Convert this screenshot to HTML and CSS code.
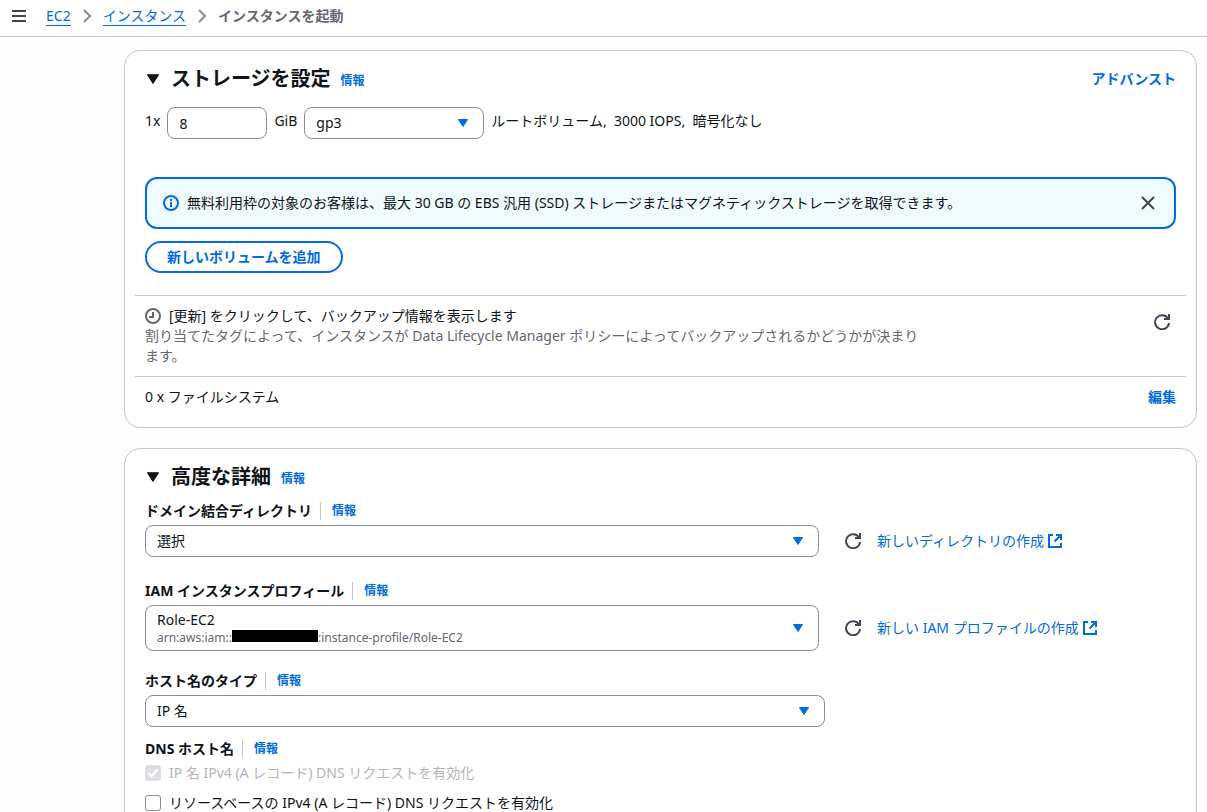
FILE: index.html
```html
<!DOCTYPE html>
<html lang="ja">
<head>
  <meta charset="UTF-8">
  <title>インスタンスを起動 | EC2</title>
  <meta name="viewport" content="width=device-width, initial-scale=1.0">
  <link rel="stylesheet" href="styles.css">
</head>
<body>

<svg class="sprite" aria-hidden="true">
  <symbol id="caret" viewBox="0 0 10 8"><path d="M.5 .5h9L5 7.5z" fill="currentColor" stroke="currentColor" stroke-linejoin="round"/></symbol>
  <symbol id="chevron" viewBox="0 0 16 16"><path d="M5 2l6 6-6 6" fill="none" stroke="currentColor" stroke-width="2"/></symbol>
  <symbol id="refresh" viewBox="0 0 16 16"><path d="M15 9A7 7 0 1 1 14 4.500M15 0v5h-5" fill="none" stroke="currentColor" stroke-width="2"/></symbol>
  <symbol id="external" viewBox="0 0 14 14"><path d="M5 1H1v12h12V9M8 1h5v5M13 1L6.500 7.500" fill="none" stroke="currentColor" stroke-width="2"/></symbol>
</svg>

<header class="topbar">
  <button class="icon-button" aria-label="メニュー">
    <svg width="14" height="12" viewBox="0 0 14 12"><path d="M0 1h14M0 6h14M0 11h14" stroke="currentColor" stroke-width="2"/></svg>
  </button>
  <nav class="breadcrumb">
    <a href="#">EC2</a>
    <svg class="separator"><use href="#chevron"/></svg>
    <a href="#">インスタンス</a>
    <svg class="separator"><use href="#chevron"/></svg>
    <span class="current">インスタンスを起動</span>
  </nav>
</header>

<main>
  <section class="card">
    <div class="card-header">
      <svg class="toggle"><use href="#caret"/></svg>
      <h2>ストレージを設定</h2>
      <a class="info" href="#">情報</a>
      <a class="action" href="#">アドバンスト</a>
    </div>

    <div class="volume">
      <label for="size">1x</label>
      <input class="control size" type="text" id="size" value="8">
      <label for="volumeType">GiB</label>
      <div class="select volume-type">
        <select class="control" id="volumeType"><option>gp3</option></select>
        <svg class="caret"><use href="#caret"/></svg>
      </div>
      <span class="volume-note">ルートボリューム,&nbsp; 3000 IOPS,&nbsp; 暗号化なし</span>
    </div>

    <div class="alert">
      <svg width="16" height="16" viewBox="0 0 16 16"><circle cx="8" cy="8" r="7" fill="none" stroke="currentColor" stroke-width="2"/><path d="M8 4v2M8 7v5" fill="none" stroke="currentColor" stroke-width="2"/></svg>
      <p>無料利用枠の対象のお客様は、最大 30 GB の EBS 汎用 (SSD) ストレージまたはマグネティックストレージを取得できます。</p>
      <button class="icon-button" aria-label="閉じる">
        <svg width="14" height="14" viewBox="0 0 14 14"><path d="M1 1l12 12M13 1L1 13" stroke="currentColor" stroke-width="2"/></svg>
      </button>
    </div>

    <button class="add-button">新しいボリュームを追加</button>

    <div class="card-row">
      <div class="backup">
        <p class="backup-title">
          <svg width="16" height="16" viewBox="0 0 16 16"><circle cx="8" cy="8" r="7" fill="none" stroke="currentColor" stroke-width="2"/><path d="M8 4v5H4" fill="none" stroke="currentColor" stroke-width="2"/></svg>
          [更新] をクリックして、バックアップ情報を表示します
        </p>
        <p class="backup-text">割り当てたタグによって、インスタンスが Data Lifecycle Manager ポリシーによってバックアップされるかどうかが決まります。</p>
      </div>
      <button class="icon-button refresh" aria-label="更新"><svg width="16" height="16"><use href="#refresh"/></svg></button>
    </div>

    <div class="card-row">
      <span>0 x ファイルシステム</span>
      <a class="action" href="#">編集</a>
    </div>
  </section>

  <section class="card">
    <div class="card-header">
      <svg class="toggle"><use href="#caret"/></svg>
      <h2>高度な詳細</h2>
      <a class="info" href="#">情報</a>
    </div>

    <div class="fields">
      <div class="field">
        <div class="field-label"><label for="directory">ドメイン結合ディレクトリ</label><a class="info" href="#">情報</a></div>
        <div class="field-row">
          <div class="select">
            <select class="control" id="directory"><option>選択</option></select>
            <svg class="caret"><use href="#caret"/></svg>
          </div>
          <div class="side">
            <button class="icon-button" aria-label="更新"><svg width="16" height="16"><use href="#refresh"/></svg></button>
            <a href="#">新しいディレクトリの作成<svg width="14" height="14"><use href="#external"/></svg></a>
          </div>
        </div>
      </div>

      <div class="field">
        <div class="field-label"><label for="profile">IAM インスタンスプロフィール</label><a class="info" href="#">情報</a></div>
        <div class="field-row">
          <div class="select">
            <select class="control two-line" id="profile" aria-describedby="arn"><option>Role-EC2</option></select>
            <span class="arn" id="arn">arn:aws:iam::<span class="redacted"></span>:instance-profile/Role-EC2</span>
            <svg class="caret"><use href="#caret"/></svg>
          </div>
          <div class="side">
            <button class="icon-button" aria-label="更新"><svg width="16" height="16"><use href="#refresh"/></svg></button>
            <a href="#">新しい IAM プロファイルの作成<svg width="14" height="14"><use href="#external"/></svg></a>
          </div>
        </div>
      </div>

      <div class="field">
        <div class="field-label"><label for="hostname">ホスト名のタイプ</label><a class="info" href="#">情報</a></div>
        <div class="select hostname">
          <select class="control" id="hostname"><option>IP 名</option></select>
          <svg class="caret"><use href="#caret"/></svg>
        </div>
      </div>

      <div class="dns" role="group" aria-labelledby="dns">
        <div class="field-label"><span id="dns">DNS ホスト名</span><a class="info" href="#">情報</a></div>
        <label class="check disabled">
          <input type="checkbox" checked disabled>
          <svg class="tick" width="16" height="16" viewBox="0 0 16 16"><path d="M3.500 8l3 3.500L12.500 4.500" fill="none" stroke="#fff" stroke-width="2"/></svg>
          IP 名 IPv4 (A レコード) DNS リクエストを有効化
        </label>
        <label class="check">
          <input type="checkbox">
          リソースベースの IPv4 (A レコード) DNS リクエストを有効化
        </label>
      </div>
    </div>
  </section>
</main>

</body>
</html>
```
FILE: styles.css
```css
* {
  box-sizing: border-box;
}
body {
  margin: 0;
  background: #fdfdfd;
  color: #0f141a;
  font: 14px/20px "Noto Sans", "Noto Sans CJK JP", sans-serif;
}
h2, p {
  margin: 0;
}
a {
  color: #006ce0;
  text-decoration: none;
}
svg {
  flex: none;
}
button, input, select {
  font: inherit;
  color: inherit;
}
.sprite {
  position: absolute;
  width: 0;
  height: 0;
}
.icon-button {
  display: flex;
  padding: 6px;
  border: 0;
  background: none;
  color: #424650;
  cursor: pointer;
}

.topbar {
  display: flex;
  align-items: center;
  gap: 14px;
  height: 37px;
  padding: 0 6px 4px;
  background: #fff;
  border-bottom: 1px solid #c6c6cd;
}
.breadcrumb {
  display: flex;
  align-items: center;
  gap: 8px;
}
.breadcrumb a {
  line-height: 18px;
  border-bottom: 1px solid #006ce0;
}
.separator {
  width: 16px;
  height: 16px;
  color: #8c8c94;
}
.current {
  font-weight: bold;
  color: #656871;
}

main {
  display: flex;
  flex-direction: column;
  gap: 20px;
  padding: 13px 10px 20px 124px;
}
.card {
  padding: 16px 20px 20px;
  background: #fff;
  border: 1px solid #c6c6cd;
  border-radius: 16px;
}
.card-header {
  display: flex;
  align-items: center;
}
.card-header h2 {
  margin: 0 10px 0 12px;
  font-size: 20px;
  line-height: 24px;
}
.toggle {
  width: 12px;
  height: 10px;
  margin-left: 2px;
}
.info {
  font-size: 12px;
  font-weight: bold;
}
.card-header .info {
  padding-top: 4px;
}
.action {
  margin-left: auto;
  font-weight: bold;
}

.control {
  width: 100%;
  height: 32px;
  padding: 0 11px;
  background: #fff;
  border: 1px solid #8c8c94;
  border-radius: 8px;
  appearance: none;
}
.select {
  position: relative;
}
.caret {
  position: absolute;
  top: 50%;
  right: 16px;
  width: 10px;
  height: 8px;
  margin-top: -4px;
  color: #006ce0;
  pointer-events: none;
}
.volume {
  display: flex;
  gap: 7px;
  margin: 16px 0 38px;
  line-height: 28px;
}
.size {
  width: 100px;
}
.volume-type {
  width: 180px;
}

.alert {
  display: flex;
  align-items: center;
  gap: 8px;
  padding: 10px 13px 10px 16px;
  min-height: 52px;
  background: #f0fbff;
  border: 2px solid #006ce0;
  border-radius: 12px;
  color: #006ce0;
}
.alert p {
  flex: 1;
  color: #0f141a;
}
.add-button {
  display: block;
  height: 32px;
  margin: 12px 0 22px;
  padding: 0 20px;
  background: #fff;
  border: 2px solid #006ce0;
  border-radius: 16px;
  color: #006ce0;
  font-weight: bold;
  cursor: pointer;
}
.card-row {
  display: flex;
  justify-content: space-between;
  align-items: flex-start;
  margin: 0 -10px;
  padding: 10px;
  border-top: 1px solid #c6c6cd;
}
.card-row:last-child {
  padding-bottom: 0;
}
.backup {
  width: 75%;
}
.backup-title {
  display: flex;
  align-items: center;
  gap: 8px;
}
.backup-title svg, .backup-text {
  color: #656871;
}
.refresh {
  margin-top: 2px;
}

.fields {
  margin-top: 12px;
}
.field {
  margin-bottom: 24px;
}
.field + .field {
  margin-bottom: 20px;
}
.field:has(+ .dns) {
  margin-bottom: 12px;
}
.field-label {
  display: flex;
  align-items: center;
  margin-bottom: 4px;
  font-weight: bold;
}
.field-label .info {
  margin-left: 8px;
  padding-left: 11px;
  border-left: 1px solid #c6c6cd;
  line-height: 18px;
}
.field-row {
  display: grid;
  grid-template-columns: 2fr 1fr;
  align-items: center;
  gap: 20px;
}
.side {
  display: flex;
  align-items: center;
  gap: 10px;
}
.side a {
  display: flex;
  align-items: center;
  gap: 4px;
  white-space: nowrap;
}
.two-line {
  display: block;
  height: 46px;
  padding-bottom: 16px;
}
.arn {
  position: absolute;
  left: 12px;
  bottom: 5px;
  font-size: 12px;
  line-height: 16px;
  color: #656871;
  pointer-events: none;
}
.redacted {
  display: inline-block;
  width: 86px;
  height: 12px;
  background: #000;
  vertical-align: 0;
}
.hostname {
  width: 66%;
}
.check {
  display: flex;
  align-items: center;
  gap: 8px;
  position: relative;
  margin-bottom: 10px;
}
.check input {
  width: 16px;
  height: 16px;
  margin: 0;
  background: #fff;
  border: 1px solid #8c8c94;
  border-radius: 3px;
  appearance: none;
}
.check.disabled {
  color: #b4b4bb;
}
.check.disabled input {
  background: #dedee3;
  border-color: #dedee3;
}
.tick {
  position: absolute;
  left: 0;
}
```
